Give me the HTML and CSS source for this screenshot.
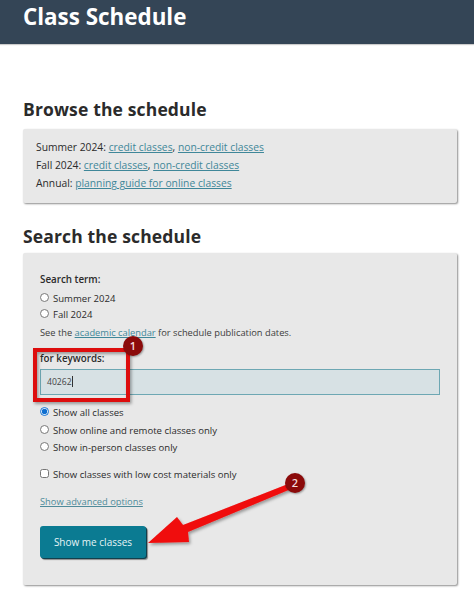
FILE: index.html
```html
<!DOCTYPE html>
<html lang="en">
<head>
<meta charset="utf-8">
<title>Class Schedule</title>
<link rel="stylesheet" href="styles.css">
</head>
<body>
<header class="site-header"><h1>Class Schedule</h1></header>
<main class="content">
  <section class="browse">
    <h2>Browse the schedule</h2>
    <div class="panel browse-panel">
      <p>Summer 2024: <a href="#">credit classes</a>, <a href="#">non-credit classes</a></p>
      <p>Fall 2024: <a href="#">credit classes</a>, <a href="#">non-credit classes</a></p>
      <p>Annual: <a href="#">planning guide for online classes</a></p>
    </div>
  </section>
  <section class="search">
    <h2>Search the schedule</h2>
    <form class="panel search-panel">
      <div class="field-label">Search term:</div>
      <label class="opt term"><input type="radio" name="term"> Summer 2024</label>
      <label class="opt term"><input type="radio" name="term"> Fall 2024</label>
      <p class="hint">See the <a href="#">academic calendar</a> for schedule publication dates.</p>
      <div class="field-label keywords-label">for keywords:</div>
      <div class="keywords">40262<span class="caret"></span></div>
      <div class="mode">
        <label class="opt"><input type="radio" name="mode" checked> Show all classes</label>
        <label class="opt"><input type="radio" name="mode"> Show online and remote classes only</label>
        <label class="opt"><input type="radio" name="mode"> Show in-person classes only</label>
      </div>
      <label class="opt low-cost"><input type="checkbox"> Show classes with low cost materials only</label>
      <a class="advanced" href="#">Show advanced options</a>
      <button class="submit" type="button">Show me classes</button>
    </form>
  </section>
</main>
<svg class="annotations" width="474" height="596" viewBox="0 0 474 596" aria-hidden="true">
  <defs>
    <filter id="soft" x="-20%" y="-20%" width="140%" height="140%">
      <feDropShadow dx="1.5" dy="2" stdDeviation="1.5" flood-color="#000" flood-opacity=".35"/>
    </filter>
  </defs>
  <rect class="callout" x="35" y="350" width="93" height="50" filter="url(#soft)"/>
  <path class="arrow" d="M148 543 L177 517 L183 525 L288 484 L291 489 L188 532 L189 542 Z" filter="url(#soft)"/>
</svg>
<div class="badge badge-one">1</div>
<div class="badge badge-two">2</div>
</body>
</html>
```
FILE: styles.css
```css
* { box-sizing: border-box; }
html, body { margin: 0; padding: 0; }
body {
  position: relative;
  width: 474px;
  height: 596px;
  overflow: hidden;
  background: #fff;
  color: #2b2b2b;
  font-family: "Open Sans", "Noto Sans", sans-serif;
  font-size: 10.3px;
}
.site-header {
  height: 44px;
  background: #344556;
  padding-left: 23px;
  box-shadow: 0 1px 1px rgba(0,0,0,.2);
}
.site-header h1 {
  margin: 0;
  color: #fff;
  font-size: 22.4px;
  line-height: 34px;
  font-weight: 700;
}
.content { padding: 53px 17px 0 23px; }
h2 {
  margin: 0;
  font-size: 17.5px;
  line-height: 24px;
  font-weight: 700;
  letter-spacing: .15px;
  color: #2b2b2b;
}
.panel {
  background: #e8e8e8;
  border-radius: 2px;
  box-shadow: 1px 1px 2px rgba(0,0,0,.45);
}
.browse-panel {
  margin-top: 8px;
  height: 74px;
  padding: 9px 13px;
}
.browse-panel p {
  margin: 0;
  line-height: 18.2px;
}
a { color: #3f8799; text-decoration: underline; }
.search { margin-top: 21px; }
.search-panel {
  margin-top: 5px;
  height: 332px;
  padding: 19px 17px 0;
  display: flex;
  flex-direction: column;
  align-items: flex-start;
  font-size: 9.3px;
}
.field-label { font-weight: 600; line-height: 16px; font-size: 9.8px; }
.opt {
  display: flex;
  align-items: center;
  gap: 4px;
  height: 17px;
  font-weight: 500;
  font-size: 9.55px;
}
.opt.term { height: 16.5px; }
.mode .opt { height: 17.5px; }
.opt input {
  margin: 0;
  width: 9px;
  height: 9px;
  accent-color: #0f6fd0;
  transform: translateY(-1px);
}
.search-panel .field-label + .opt { margin-top: 2px; }
.hint { margin: 2px 0 0; line-height: 16px; color: #3c3c3c; }
.keywords-label { margin-top: 10px; }
.keywords {
  margin-top: 2px;
  align-self: stretch;
  height: 26px;
  background: #d7e1e4;
  border: 1px solid #6da7b3;
  padding-left: 6px;
  line-height: 24px;
  font-size: 8.6px;
  color: #444;
}
.caret {
  display: inline-block;
  width: 1px;
  height: 11px;
  background: #333;
  vertical-align: -2px;
}
.mode { margin-top: 9px; }
.low-cost { margin-top: 9px; }
.advanced { margin-top: 11px; line-height: 16px; color: #4f8b9a; }
.submit {
  margin-top: 16px;
  width: 106px;
  height: 32px;
  border: 0;
  border-radius: 3px;
  background: #0b7b92;
  color: #e6f4f6;
  font: 500 10px "Open Sans", sans-serif;
  box-shadow: 1px 1px 0 #123f4c, 2px 2px 1px rgba(0,0,0,.4);
}
.annotations {
  position: absolute;
  left: 0;
  top: 0;
  pointer-events: none;
}
.callout { fill: none; stroke: #dd1111; stroke-width: 4; }
.arrow { fill: #f00a0a; }
.badge {
  position: absolute;
  width: 20px;
  height: 20px;
  border-radius: 50%;
  background: #8b0a0a;
  color: #f3dcdc;
  font-size: 11px;
  font-weight: 600;
  line-height: 20px;
  text-align: center;
  box-shadow: 1px 1px 2px rgba(0,0,0,.35);
}
.badge-one { left: 123px; top: 336px; }
.badge-two { left: 285px; top: 473px; }
```
